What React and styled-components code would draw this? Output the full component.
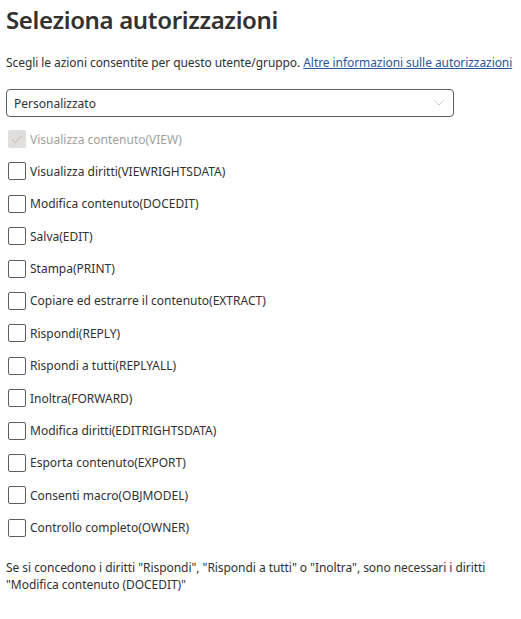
import styled, { createGlobalStyle } from 'styled-components';

const GlobalStyle = createGlobalStyle`
  html, body {
    margin: 0;
    padding: 0;
    background: #ffffff;
  }
  body {
    font-family: "Segoe UI", "Noto Sans", sans-serif;
    color: #323130;
  }
`;

const Page = styled.div`
  width: 521px;
  padding: 4px 6px 0 6px;
  box-sizing: border-box;
`;

const Title = styled.h1`
  margin: 0;
  font-size: 24px;
  line-height: 32px;
  font-weight: 600;
  letter-spacing: -0.35px;
  color: #323130;
`;

const Intro = styled.p`
  margin: 18px 0 0 0;
  font-size: 12px;
  line-height: 17px;
  letter-spacing: -0.07px;
  white-space: nowrap;
`;

const Link = styled.a`
  color: #2b579a;
  text-decoration: underline;
`;

const Dropdown = styled.div`
  margin-top: 18px;
  width: 448px;
  height: 28px;
  box-sizing: border-box;
  border: 1px solid #605e5c;
  border-radius: 4px;
  display: flex;
  align-items: center;
  justify-content: space-between;
  padding: 0 8px 0 7px;
  font-size: 12px;
`;

const List = styled.div`
  margin-top: 13px;
  display: flex;
  flex-direction: column;
  gap: 14.4px;
`;

const Row = styled.label`
  display: flex;
  align-items: center;
  gap: 4px;
  height: 18px;
  padding-left: 2px;
  font-size: 12px;
  color: ${p => (p.$disabled ? '#a19f9d' : '#323130')};
`;

const Box = styled.span`
  width: 18px;
  height: 18px;
  box-sizing: border-box;
  border-radius: 2px;
  border: 1px solid ${p => (p.$disabled ? '#e1dfdd' : '#605e5c')};
  background: ${p => (p.$disabled ? '#e1dfdd' : '#ffffff')};
  display: flex;
  align-items: center;
  justify-content: center;
  flex: none;
`;

const Note = styled.p`
  margin: 22px 0 0 0;
  font-size: 12px;
  line-height: 17px;
  letter-spacing: -0.05px;
`;

const rights = [
  'Visualizza contenuto(VIEW)',
  'Visualizza diritti(VIEWRIGHTSDATA)',
  'Modifica contenuto(DOCEDIT)',
  'Salva(EDIT)',
  'Stampa(PRINT)',
  'Copiare ed estrarre il contenuto(EXTRACT)',
  'Rispondi(REPLY)',
  'Rispondi a tutti(REPLYALL)',
  'Inoltra(FORWARD)',
  'Modifica diritti(EDITRIGHTSDATA)',
  'Esporta contenuto(EXPORT)',
  'Consenti macro(OBJMODEL)',
  'Controllo completo(OWNER)',
];

const App = () => (
  <>
    <GlobalStyle />
    <Page>
      <Title>Seleziona autorizzazioni</Title>
      <Intro>
        Scegli le azioni consentite per questo utente/gruppo.{' '}
        <Link href="#">Altre informazioni sulle autorizzazioni</Link>
      </Intro>
      <Dropdown>
        <span>Personalizzato</span>
        <svg width="12" height="8" viewBox="0 0 12 8">
          <path d="M1.5 1.5 L6 6 L10.5 1.5" fill="none" stroke="#c8c6c4" strokeWidth="1" />
        </svg>
      </Dropdown>
      <List>
        {rights.map((r, i) => (
          <Row key={r} $disabled={i === 0}>
            <Box $disabled={i === 0}>
              {i === 0 && (
                <svg width="12" height="10" viewBox="0 0 12 10">
                  <path d="M1 5.5 L4.3 8.5 L11 1.5" fill="none" stroke="#c8c6c4" strokeWidth="1.2" />
                </svg>
              )}
            </Box>
            {r}
          </Row>
        ))}
      </List>
      <Note>
        Se si concedono i diritti "Rispondi", "Rispondi a tutti" o "Inoltra", sono necessari i diritti
        <br />
        "Modifica contenuto (DOCEDIT)"
      </Note>
    </Page>
  </>
);

export default App;
